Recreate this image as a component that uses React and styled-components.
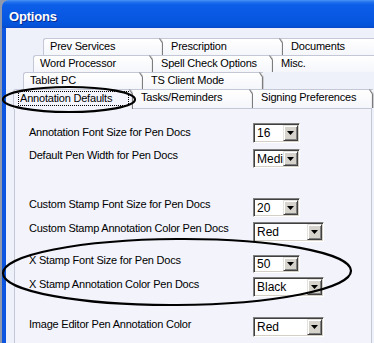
import React from "react";
import styled, { createGlobalStyle } from "styled-components";

const Global = createGlobalStyle`
  html, body { margin: 0; padding: 0; background: #8f99ae; }
  body { width: 374px; height: 343px; overflow: hidden; font-family: "Liberation Sans", Arial, sans-serif; }
`;

const Screen = styled.div`
  position: relative;
  width: 374px;
  height: 343px;
  overflow: hidden;
`;

const Window = styled.div`
  width: 372px;
  height: 343px;
  margin-left: 2px;
  display: flex;
  flex-direction: column;
`;

const TitleBar = styled.div`
  flex: none;
  height: 28px;
  box-sizing: border-box;
  padding-left: 7px;
  display: flex;
  align-items: center;
  border-top-left-radius: 7px;
  background: linear-gradient(
    to bottom,
    #4a95f7 0px,
    #2272ee 2px,
    #0c5de8 5px,
    #0959e4 14px,
    #0656df 22px,
    #0452d8 26px,
    #0a48c4 28px
  );
`;

const Title = styled.span`
  color: #fff;
  font-family: "Liberation Sans", Arial, sans-serif;
  font-weight: bold;
  font-size: 13px;
  letter-spacing: -0.2px;
  padding-top: 4px;
  text-shadow: 1px 1px 0 #0b2a8c;
`;

const Body = styled.div`
  flex: 1;
  display: flex;
  flex-direction: column;
  padding-top: 10px;
  background: #eef0fa;
  border-left: 4px solid #0b55e0;
  min-height: 0;
`;

const TabRow = styled.div`
  flex: none;
  display: flex;
  height: ${(p) => p.$h}px;
  padding-left: ${(p) => p.$pad}px;
  position: relative;
  z-index: 1;
`;

const Tab = styled.div`
  position: relative;
  flex: none;
  width: 120px;
  box-sizing: border-box;
  height: ${(p) => (p.$selected ? p.$h + 1 : p.$h)}px;
  padding-left: ${(p) => (p.$first ? 6 : 8)}px;
  padding-top: ${(p) => (p.$selected ? 1 : 0)}px;
  border-top: 1px solid #c3c7d6;
  border-left: ${(p) => (p.$first ? "1px solid #c3c7d6" : "none")};
  border-top-left-radius: ${(p) => (p.$first ? 3 : 0)}px;
  background: ${(p) =>
    p.$selected ? "#f4f5fc" : "linear-gradient(to bottom, #ffffff, #f5f6fb)"};
  font-size: 11px;
  letter-spacing: -0.2px;
  line-height: ${(p) => (p.$selected ? 15 : 14)}px;
  color: #000;
  white-space: nowrap;
`;

const Focus = styled.span`
  display: inline-block;
  box-sizing: border-box;
  width: 111px;
  margin-left: -2px;
  padding-left: 1px;
  border: 1px dotted #000;
  line-height: 13px;
`;

const EdgeSvg = styled.svg`
  position: absolute;
  top: -1px;
  right: -2px;
  overflow: visible;
`;

const TabEdge = ({ h }) => (
  <EdgeSvg width="5" height={h}>
    <polyline
      points={`-0.5,0.5 2.5,5 2.5,${h}`}
      fill="none"
      stroke="#7c7c7c"
      strokeWidth="1.2"
    />
    <polyline
      points={`0.5,0.5 3.5,5 3.5,${h}`}
      fill="none"
      stroke="#c4c4c8"
      strokeWidth="0.8"
    />
  </EdgeSvg>
);

const Panel = styled.div`
  flex: 1;
  margin-left: 8px;
  width: 358px;
  box-sizing: border-box;
  border: 1px solid #c4c8d6;
  border-bottom: none;
  background: #f2f3fb;
  padding-left: 14px;
  display: flex;
  flex-direction: column;
`;

const Row = styled.div`
  display: flex;
  align-items: flex-start;
  margin-top: ${(p) => p.$mt}px;
`;

const Label = styled.div`
  width: 224px;
  flex: none;
  margin-top: ${(p) => p.$shift}px;
  font-size: 11px;
  line-height: 13px;
  letter-spacing: -0.22px;
  color: #000;
  white-space: nowrap;
`;

const Combo = styled.div`
  width: ${(p) => p.$w}px;
  height: ${(p) => p.$h}px;
  box-sizing: border-box;
  display: flex;
  align-items: stretch;
  padding: 1px;
  background: #fff;
  border: 1px solid;
  border-color: #808080 #ffffff #ffffff #808080;
  box-shadow: inset 1px 1px 0 #404040, inset -1px -1px 0 #d4d0c8;
`;

const ComboText = styled.div`
  flex: 1;
  overflow: hidden;
  white-space: nowrap;
  padding-left: 2px;
  display: flex;
  align-items: center;
  font-size: 12px;
  color: #000;
`;

const DropButton = styled.div`
  flex: none;
  width: 15px;
  box-sizing: border-box;
  display: flex;
  align-items: center;
  justify-content: center;
  background: #d6d3cc;
  border: 1px solid;
  border-color: #e4e2dc #404040 #404040 #e4e2dc;
  box-shadow: inset 1px 1px 0 #ffffff, inset -1px -1px 0 #808080;
`;

const Arrow = () => (
  <svg width="7" height="4" viewBox="0 0 7 4">
    <polygon points="0,0 7,0 3.5,4" fill="#000" />
  </svg>
);

const Overlay = styled.svg`
  position: absolute;
  left: 0;
  top: 0;
  pointer-events: none;
  z-index: 5;
`;

const tabRows = [
  { pad: 37, h: 17, tabs: ["Prev Services", "Prescription", "Documents"] },
  { pad: 27, h: 17, tabs: ["Word Processor", "Spell Check Options", "Misc."] },
  { pad: 17, h: 17, tabs: ["Tablet PC", "TS Client Mode"] },
  {
    pad: 7,
    h: 19,
    tabs: ["Annotation Defaults", "Tasks/Reminders", "Signing Preferences"],
    selected: 0,
  },
];

const settings = [
  { label: "Annotation Font Size for Pen Docs", value: "16", w: 47, h: 20, mt: 14, shift: 3 },
  { label: "Default Pen Width for Pen Docs", value: "Medium", w: 47, h: 19, mt: 6, shift: 0 },
  { label: "Custom Stamp Font Size for Pen Docs", value: "20", w: 47, h: 19, mt: 30, shift: -0.5 },
  { label: "Custom Stamp Annotation Color Pen Docs", value: "Red", w: 71, h: 20, mt: 5, shift: -0.5 },
  { label: "X Stamp Font Size for Pen Docs", value: "50", w: 47, h: 18, mt: 13, shift: -1.5 },
  { label: "X Stamp Annotation Color Pen Docs", value: "Black", w: 71, h: 20, mt: 4, shift: 0.5 },
  { label: "Image Editor Pen Annotation Color", value: "Red", w: 71, h: 20, mt: 20, shift: 0.5 },
];

export default function App() {
  return (
    <Screen>
      <Global />
      <Window>
        <TitleBar>
          <Title>Options</Title>
        </TitleBar>
        <Body>
          {tabRows.map((row, ri) => (
            <TabRow key={ri} $h={row.h} $pad={row.pad}>
              {row.tabs.map((t, ti) => {
                const sel = row.selected === ti;
                return (
                  <Tab key={t} $h={row.h} $first={ti === 0} $selected={sel}>
                    {sel ? <Focus>{t}</Focus> : t}
                    <TabEdge h={sel ? row.h + 1 : row.h} />
                  </Tab>
                );
              })}
            </TabRow>
          ))}
          <Panel>
            {settings.map((s) => (
              <Row key={s.label} $mt={s.mt}>
                <Label $shift={s.shift}>{s.label}</Label>
                <Combo $w={s.w} $h={s.h}>
                  <ComboText>{s.value}</ComboText>
                  <DropButton>
                    <Arrow />
                  </DropButton>
                </Combo>
              </Row>
            ))}
          </Panel>
        </Body>
      </Window>
      <Overlay width="374" height="343" viewBox="0 0 374 343">
        <ellipse cx="69" cy="99.5" rx="66" ry="12.5" fill="none" stroke="#000" strokeWidth="2.2" />
        <ellipse
          cx="177"
          cy="272"
          rx="174"
          ry="33"
          fill="none"
          stroke="#000"
          strokeWidth="2.2"
          transform="rotate(-0.4 177 272)"
        />
      </Overlay>
    </Screen>
  );
}
